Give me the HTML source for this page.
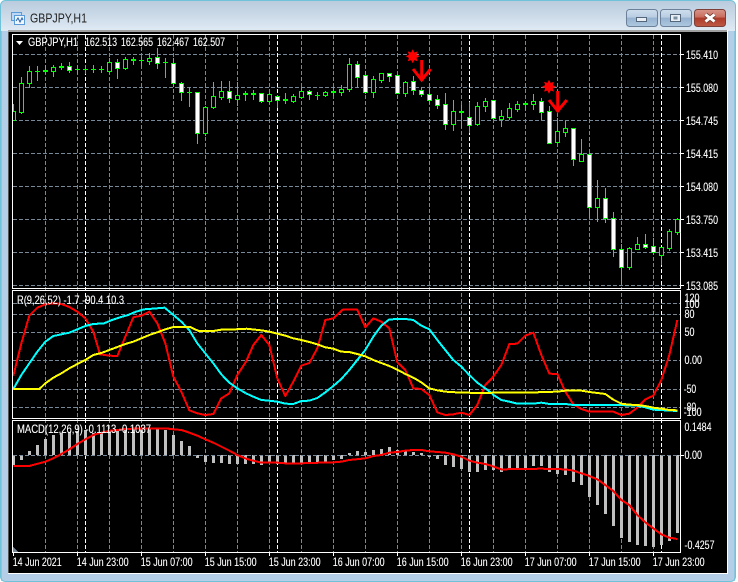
<!DOCTYPE html>
<html><head><meta charset="utf-8"><title>GBPJPY,H1</title>
<style>
html,body{margin:0;padding:0;background:#fff;width:738px;height:582px;overflow:hidden}
svg{display:block}
text{font-family:"Liberation Sans",sans-serif;font-size:12px;fill:#fff;stroke:#fff;stroke-width:.12}
.c{shape-rendering:crispEdges}
</style></head><body>
<svg width="738" height="582" viewBox="0 0 738 582" xmlns="http://www.w3.org/2000/svg">
<defs>
<linearGradient id="tt" x1="0" y1="0" x2="0" y2="1"><stop offset="0" stop-color="#b9cbdd"/><stop offset="1" stop-color="#dfeaf4"/></linearGradient>
<linearGradient id="btn" x1="0" y1="0" x2="0" y2="1"><stop offset="0" stop-color="#cfdeee"/><stop offset=".45" stop-color="#b9cde2"/><stop offset=".5" stop-color="#96b2cf"/><stop offset="1" stop-color="#aec8df"/></linearGradient>
<linearGradient id="cls" x1="0" y1="0" x2="0" y2="1"><stop offset="0" stop-color="#d8968a"/><stop offset=".45" stop-color="#c96e5f"/><stop offset=".5" stop-color="#ad3a28"/><stop offset="1" stop-color="#bd5a46"/></linearGradient>
<clipPath id="p1"><rect x="13" y="35" width="667" height="253"/></clipPath>
<clipPath id="p2"><rect x="13" y="291" width="667" height="127"/></clipPath>
<clipPath id="p3"><rect x="13" y="421" width="667" height="131"/></clipPath>
</defs>
<!-- window frame -->
<rect x=".5" y=".5" width="735" height="581" rx="5" fill="#b5cee7" stroke="#6fc2d8"/>
<path d="M1 6a5 5 0 0 1 5-5H730a5 5 0 0 1 5 5V31H1z" fill="url(#tt)"/>
<path d="M1.500 31V581M734.500 31V581" stroke="#6fc2d8" class="c" opacity=".6"/>
<!-- title icon -->
<g class="c">
<rect x="11.500" y="12.500" width="10" height="8" fill="#bcd8f4" stroke="#5a9ad8"/>
<rect x="14.500" y="15.500" width="10" height="9" fill="#eef6fe" stroke="#5a9ad8"/>
</g>
<path d="M16 21l2-3 2 4 2-4 1 2" fill="none" stroke="#2a62a8"/>
<text x="30" y="22.500" textLength="57" lengthAdjust="spacingAndGlyphs" style="font-size:13px;fill:#222;stroke:none">GBPJPY,H1</text>
<!-- buttons -->
<rect x="626.500" y="9.500" width="31" height="17" rx="3" fill="url(#btn)" stroke="#6b8199"/>
<rect x="636.500" y="17.500" width="10" height="4" fill="#e8eef4" stroke="#54667a" class="c"/>
<rect x="660.500" y="9.500" width="31" height="17" rx="3" fill="url(#btn)" stroke="#6b8199"/>
<rect x="670.500" y="14.500" width="10" height="7" fill="#e8eef4" stroke="#54667a" class="c"/>
<rect x="673.500" y="16.500" width="4" height="3" fill="#7a8ea2" class="c"/>
<rect x="694.500" y="9.500" width="31" height="17" rx="3" fill="url(#cls)" stroke="#7c4038"/>
<path d="M705.500 14.500l9 7M714.500 14.500l-9 7" stroke="#6e3a32" stroke-width="4.500"/>
<path d="M705.500 14.500l9 7M714.500 14.500l-9 7" stroke="#fff" stroke-width="2.800"/>
<!-- client area -->
<rect x="8" y="30" width="720" height="544" fill="#fff" class="c"/>
<rect x="8" y="30" width="719" height="2" fill="#a0a0a0" class="c"/>
<rect x="8" y="32" width="1" height="541" fill="#555" class="c"/>
<rect x="9" y="32" width="718" height="541" fill="#000" class="c"/>
<!-- grid -->
<path class="c" fill="none" stroke="#778899" stroke-dasharray="4 2" d="M13 54.500H680M13 87.500H680M13 120.500H680M13 153.500H680M13 186.500H680M13 219.500H680M13 252.500H680M13 285.500H680M13 303.500H680M13 314.500H680M13 332.500H680M13 360.500H680M13 389.500H680M13 407.500H680M13 455.500H680M45.500 35V552M77.500 35V552M109.500 35V552M141.500 35V552M173.500 35V552M205.500 35V552M237.500 35V552M269.500 35V552M301.500 35V552M333.500 35V552M365.500 35V552M397.500 35V552M429.500 35V552M461.500 35V552M493.500 35V552M525.500 35V552M557.500 35V552M589.500 35V552M621.500 35V552M653.500 35V552"/>
<path class="c" fill="none" stroke="#fff" stroke-dasharray="4 2" d="M85.500 35V552M277.500 35V552M469.500 35V552M661.500 35V552"/>
<!-- candles -->
<g clip-path="url(#p1)" class="c">
<path fill="none" stroke="#00ff00" d="M13.500 104V121M21.500 77V114M29.500 66V88M37.500 66V81M45.500 65V74M53.500 65V77M61.500 63V70M69.500 62V73M77.500 65V74M85.500 65V74M93.500 65V73M101.500 66V73M109.500 58V74M117.500 59V79M125.500 57V70M133.500 57V65M141.500 57V66M149.500 53V65M157.500 48V69M165.500 58V78M173.500 58V87M181.500 82V101M189.500 87V107M197.500 92V144M205.500 106V136M213.500 82V109M221.500 81V100M229.500 81V103M237.500 82V106M245.500 91V101M253.500 90V100M261.500 93V103M269.500 93V104M277.500 95V108M285.500 93V104M293.500 94V103M301.500 87V99M309.500 90V100M317.500 92V100M325.500 91V97M333.500 87V96M341.500 85V96M349.500 58V92M357.500 61V88M365.500 71V94M373.500 76V98M381.500 73V83M389.500 73V82M397.500 74V94M405.500 81V97M413.500 76V95M421.500 87V97M429.500 88V104M437.500 95V109M445.500 93V130M453.500 100V131M461.500 105V128M469.500 102V133M477.500 102V126M485.500 98V112M493.500 100V120M501.500 110V127M509.500 103V120M517.500 101V112M525.500 101V111M533.500 94V110M541.500 98V120M549.500 106V144M557.500 118V143M565.500 121V137M573.500 128V166M581.500 139V162M589.500 153V218M597.500 180V222M605.500 188V223M613.500 212V257M621.500 244V284M629.500 247V270M637.500 237V250M645.500 234V249M653.500 238V255M661.500 247V265M669.500 229V251M677.500 218V235"/>
<!-- hollow -->
<path fill="#000" stroke="#00ff00" d="M11.500 111.500h4v9h-4zM19.500 83.500h4v29h-4zM27.500 71.500h4v12h-4zM51.500 67.500h4v4h-4zM107.500 62.500h4v9h-4zM123.500 59.500h4v9h-4zM147.500 58.500h4v3h-4zM203.500 107.500h4v26h-4zM211.500 96.500h4v11h-4zM219.500 91.500h4v6h-4zM235.500 95.500h4v4h-4zM267.500 94.500h4v7h-4zM291.500 96.500h4v5h-4zM299.500 91.500h4v6h-4zM323.500 92.500h4v3h-4zM339.500 89.500h4v3h-4zM347.500 64.500h4v25h-4zM371.500 79.500h4v13h-4zM379.500 73.500h4v7h-4zM403.500 82.500h4v11h-4zM451.500 111.500h4v13h-4zM475.500 106.500h4v18h-4zM483.500 101.500h4v5h-4zM499.500 116.500h4v3h-4zM507.500 108.500h4v9h-4zM515.500 104.500h4v5h-4zM531.500 101.500h4v3h-4zM555.500 131.500h4v11h-4zM563.500 128.500h4v4h-4zM579.500 154.500h4v7h-4zM595.500 198.500h4v9h-4zM627.500 248.500h4v19h-4zM635.500 244.500h4v5h-4zM659.500 247.500h4v8h-4zM667.500 231.500h4v17h-4zM675.500 219.500h4v13h-4z"/>
<!-- white -->
<path fill="#fff" stroke="#00ff00" d="M67.500 66.500h4v4h-4zM115.500 62.500h4v6h-4zM155.500 57.500h4v6h-4zM171.500 63.500h4v20h-4zM179.500 83.500h4v9h-4zM195.500 92.500h4v41h-4zM227.500 91.500h4v7h-4zM259.500 93.500h4v8h-4zM275.500 96.500h4v4h-4zM307.500 91.500h4v3h-4zM355.500 64.500h4v13h-4zM363.500 75.500h4v17h-4zM387.500 73.500h4v3h-4zM395.500 75.500h4v18h-4zM411.500 81.500h4v9h-4zM419.500 90.500h4v4h-4zM427.500 94.500h4v6h-4zM435.500 99.500h4v6h-4zM443.500 104.500h4v20h-4zM467.500 117.500h4v8h-4zM491.500 100.500h4v18h-4zM539.500 101.500h4v11h-4zM547.500 111.500h4v32h-4zM571.500 128.500h4v31h-4zM587.500 154.500h4v53h-4zM603.500 198.500h4v20h-4zM611.500 218.500h4v31h-4zM619.500 249.500h4v18h-4zM643.500 244.500h4v3h-4zM651.500 246.500h4v6h-4z"/>
<!-- thick / thin crosses -->
<path fill="#00ff00" d="M43 70h5v2h-5zM59 66h5v2h-5zM131 59h5v2h-5zM243 93h5v2h-5zM251 93h5v2h-5zM283 99h5v2h-5zM331 91h5v2h-5zM459 111h5v2h-5zM523 103h5v2h-5zM35 71h5v1h-5zM75 69h5v1h-5zM83 69h5v1h-5zM91 69h5v1h-5zM99 69h5v1h-5zM139 60h5v1h-5zM163 62h5v1h-5zM187 92h5v1h-5zM315 95h5v1h-5z"/>
</g>
<!-- markers -->
<g fill="#ff0000">
<polygon transform="translate(412.700 56.300)" points="0,-7 1.600,-3.800 4.950,-4.950 3.800,-1.600 7,0 3.800,1.600 4.950,4.950 1.600,3.800 0,7 -1.600,3.800 -4.950,4.950 -3.800,1.600 -7,0 -3.800,-1.600 -4.950,-4.950 -1.600,-3.800"/>
<polygon transform="translate(549 86.700)" points="0,-7 1.600,-3.800 4.950,-4.950 3.800,-1.600 7,0 3.800,1.600 4.950,4.950 1.600,3.800 0,7 -1.600,3.800 -4.950,4.950 -3.800,1.600 -7,0 -3.800,-1.600 -4.950,-4.950 -1.600,-3.800"/>
</g>
<g fill="none" stroke="#ff0000" stroke-width="3">
<path d="M421.700 60V80"/><path d="M413 69l8.700 11 8.900-11"/>
<path d="M557.700 91V111"/><path d="M549 100l8.700 11 9.100-11"/>
</g>
<!-- oscillator pane -->
<g clip-path="url(#p2)" class="c" fill="none" stroke-width="6" stroke-linejoin="round">
<g transform="translate(0 285) scale(.33333)" stroke="#ff0000">
<polyline points="40,272 64,175 88,92 112,68 136,58 160,55 184,57 208,66 232,80 256,100 280,140 300,208 328,212 352,213 376,155 400,97 424,92 448,80 472,115 496,175 520,275 544,320 568,376 592,385 616,390 640,387 664,340 688,325 712,270 738,230"/>
</g>
<g transform="translate(246 285) scale(.33333)" stroke="#ff0000">
<polyline points="0,230 22,180 46,150 70,180 94,280 118,333 142,290 166,242 190,234 214,190 238,105 262,100 290,74 334,74 358,127 382,100 406,110 430,130 454,232 478,255 502,310 526,312 550,330 574,382 598,390 622,388 646,383 670,390 694,360 718,300 738,280"/>
</g>
<g transform="translate(492 285) scale(.33333)" stroke="#ff0000">
<polyline points="0,280 28,240 52,177 76,176 100,152 124,143 148,210 172,266 196,267 220,320 244,358 268,372 292,380 316,380 340,380 364,380 388,390 412,386 436,368 460,343 484,332 508,285 532,210 556,105"/>
</g>
<g transform="translate(0 285) scale(.33333)" stroke="#00ffff">
<polyline points="40,312 64,270 88,235 112,200 136,170 160,153 184,148 208,143 232,133 256,123 280,117 312,115 336,105 360,97 384,90 408,80 432,73 470,70 494,68 518,88 544,110 568,135 592,175 616,205 640,235 664,268 688,293 712,310 738,325"/>
</g>
<g transform="translate(246 285) scale(.33333)" stroke="#00ffff">
<polyline points="0,325 22,335 46,345 70,347 94,350 118,356 142,357 166,348 190,347 214,339 238,322 262,303 286,282 310,255 334,225 358,195 382,155 406,122 430,103 478,102 502,105 526,122 550,133 574,165 598,195 622,225 646,245 670,270 694,293 718,310 738,325"/>
</g>
<g transform="translate(492 285) scale(.33333)" stroke="#00ffff">
<polyline points="0,327 28,345 52,350 76,356 124,356 148,353 172,357 220,357 244,360 388,360 412,362 436,362 460,367 484,374 556,378"/>
</g>
<g transform="translate(0 285) scale(.33333)" stroke="#ffff00">
<polyline points="40,312 118,312 136,295 160,278 184,265 208,250 232,237 256,225 280,210 304,204 328,195 352,186 376,177 400,170 424,160 448,150 472,142 496,133 520,126 570,126 596,138 640,138 664,134 738,132"/>
</g>
<g transform="translate(246 285) scale(.33333)" stroke="#ffff00">
<polyline points="0,131 46,136 70,140 94,146 118,152 142,160 166,165 190,171 214,178 238,187 262,191 286,200 310,201 334,207 358,214 382,225 406,234 430,243 454,254 478,267 502,278 526,292 550,310 574,316 598,320 646,323 738,324"/>
</g>
<g transform="translate(492 285) scale(.33333)" stroke="#ffff00">
<polyline points="0,323 124,323 148,321 196,320 220,317 268,317 292,321 316,324 340,327 364,344 388,356 412,359 436,360 460,363 484,368 508,371 532,375 556,376"/>
</g>
</g>
<!-- MACD pane -->
<g clip-path="url(#p3)" class="c">
<path transform="translate(-1 0)" fill="none" stroke="#c0c0c0" stroke-width="3" d="M14.500 455V465M22.500 455V460M30.500 455V451M38.500 455V445M46.500 455V439M54.500 455V435M62.500 455V433M70.500 455V432M78.500 455V431M86.500 455V430M94.500 455V433M102.500 455V433M110.500 455V430M118.500 455V429M126.500 455V429M134.500 455V429M142.500 455V429M150.500 455V428M158.500 455V429M166.500 455V430M174.500 455V435M182.500 455V441M190.500 455V446M198.500 455V458M206.500 455V462M214.500 455V463M222.500 455V463M230.500 455V464M238.500 455V464M246.500 455V464M254.500 455V464M262.500 455V465M270.500 455V463M278.500 455V464M286.500 455V464M294.500 455V463M302.500 455V463M310.500 455V463M318.500 455V462M326.500 455V462M334.500 455V460M342.500 455V459M350.500 455V453M358.500 455V451M366.500 455V452M374.500 455V450M382.500 455V449M390.500 455V447M398.500 455V450M406.500 455V451M414.500 455V452M422.500 455V453M430.500 455V457M438.500 455V459M446.500 455V465M454.500 455V467M462.500 455V469M470.500 455V472M478.500 455V472M486.500 455V470M494.500 455V470M502.500 455V472M510.500 455V470M518.500 455V468M526.500 455V468M534.500 455V466M542.500 455V466M550.500 455V472M558.500 455V474M566.500 455V475M574.500 455V482M582.500 455V485M590.500 455V497M598.500 455V505M606.500 455V514M614.500 455V526M622.500 455V538M630.500 455V542M638.500 455V545M646.500 455V546M654.500 455V547M662.500 455V545M670.500 455V541M678.500 455V533"/>
<path fill="none" stroke="#778899" stroke-dasharray="4 2" d="M13 455.500H680"/>
<g fill="none" stroke="#ff0000" stroke-width="6" stroke-linejoin="round">
<g transform="translate(0 420) scale(.33333)"><polyline points="40,138 88,138 136,125 160,115 184,102 208,88 232,72 256,58 280,45 304,38 328,32 352,30 376,27 400,26 424,25 496,25 520,28 544,30 568,38 592,47 616,58 640,68 664,80 688,92 712,105 738,116"/></g>
<g transform="translate(246 420) scale(.33333)"><polyline points="0,116 22,122 46,128 94,128 118,130 166,130 190,129 262,127 286,125 310,120 358,115 382,108 406,105 430,98 454,96 478,92 502,90 526,90 550,94 598,98 622,103 646,110 670,122 694,128 718,132 738,138"/></g>
<g transform="translate(492 420) scale(.33333)"><polyline points="0,138 28,148 100,147 148,146 172,147 220,148 244,152 268,160 292,168 316,178 340,195 364,213 388,240 412,255 436,285 460,307 484,325 508,343 532,353 556,357"/></g>
</g>
<polygon points="13,547 13,552 18,552" fill="#778899"/>
</g>
<!-- pane borders and ticks -->
<path class="c" fill="none" stroke="#fff" d="M12.500 34.500H680.500V288.500H12.500ZM12.500 290.500H680.500V418.500H12.500ZM12.500 420.500H680.500V552.500H12.500ZM681 54.500h3M681 87.500h3M681 120.500h3M681 153.500h3M681 186.500h3M681 219.500h3M681 252.500h3M681 285.500h3M681 455.500h3M13.500 553v3M77.500 553v3M141.500 553v3M205.500 553v3M269.500 553v3M333.500 553v3M397.500 553v3M461.500 553v3M525.500 553v3M589.500 553v3M653.500 553v3"/>
<!-- header -->
<polygon points="16,41 23,41 19.500,45" fill="#fff"/>
<text x="28" y="46" textLength="50" lengthAdjust="spacingAndGlyphs">GBPJPY,H1</text>
<text x="85" y="46" textLength="32" lengthAdjust="spacingAndGlyphs">162.513</text>
<text x="121" y="46" textLength="32" lengthAdjust="spacingAndGlyphs">162.565</text>
<text x="157" y="46" textLength="32" lengthAdjust="spacingAndGlyphs">162.467</text>
<text x="193" y="46" textLength="32" lengthAdjust="spacingAndGlyphs">162.507</text>
<text x="17" y="304" textLength="107" lengthAdjust="spacingAndGlyphs">R(9,26,52) -1.7 -90.4 10.3</text>
<text x="17" y="433" textLength="134" lengthAdjust="spacingAndGlyphs">MACD(12,26,9) -0.1113 -0.1037</text>
<!-- price labels -->
<text x="686" y="59" textLength="32" lengthAdjust="spacingAndGlyphs">155.410</text>
<text x="686" y="92" textLength="32" lengthAdjust="spacingAndGlyphs">155.080</text>
<text x="686" y="125" textLength="32" lengthAdjust="spacingAndGlyphs">154.745</text>
<text x="686" y="158" textLength="32" lengthAdjust="spacingAndGlyphs">154.415</text>
<text x="686" y="191" textLength="32" lengthAdjust="spacingAndGlyphs">154.080</text>
<text x="686" y="224" textLength="32" lengthAdjust="spacingAndGlyphs">153.750</text>
<text x="686" y="257" textLength="32" lengthAdjust="spacingAndGlyphs">153.415</text>
<text x="686" y="290" textLength="32" lengthAdjust="spacingAndGlyphs">153.085</text>
<text x="684.500" y="302" textLength="15" lengthAdjust="spacingAndGlyphs">120</text>
<text x="684.500" y="308" textLength="15" lengthAdjust="spacingAndGlyphs">100</text>
<text x="684.500" y="318" textLength="10" lengthAdjust="spacingAndGlyphs">80</text>
<text x="684.500" y="336" textLength="10" lengthAdjust="spacingAndGlyphs">50</text>
<text x="684.500" y="364" textLength="17.500" lengthAdjust="spacingAndGlyphs">0.00</text>
<text x="683.700" y="393" textLength="12.500" lengthAdjust="spacingAndGlyphs">-50</text>
<text x="683.700" y="411" textLength="12.500" lengthAdjust="spacingAndGlyphs">-80</text>
<text x="683.700" y="416" textLength="18" lengthAdjust="spacingAndGlyphs">-100</text>
<text x="684.500" y="431" textLength="27" lengthAdjust="spacingAndGlyphs">0.1484</text>
<text x="684.500" y="459" textLength="17.500" lengthAdjust="spacingAndGlyphs">0.00</text>
<text x="684.500" y="549" textLength="30" lengthAdjust="spacingAndGlyphs">-0.4257</text>
<!-- date labels -->
<text x="12.700" y="566" textLength="49" lengthAdjust="spacingAndGlyphs">14 Jun 2021</text>
<text x="76.700" y="566" textLength="52" lengthAdjust="spacingAndGlyphs">14 Jun 23:00</text>
<text x="140.700" y="566" textLength="52" lengthAdjust="spacingAndGlyphs">15 Jun 07:00</text>
<text x="204.700" y="566" textLength="52" lengthAdjust="spacingAndGlyphs">15 Jun 15:00</text>
<text x="268.700" y="566" textLength="52" lengthAdjust="spacingAndGlyphs">15 Jun 23:00</text>
<text x="332.700" y="566" textLength="52" lengthAdjust="spacingAndGlyphs">16 Jun 07:00</text>
<text x="396.700" y="566" textLength="52" lengthAdjust="spacingAndGlyphs">16 Jun 15:00</text>
<text x="460.700" y="566" textLength="52" lengthAdjust="spacingAndGlyphs">16 Jun 23:00</text>
<text x="524.700" y="566" textLength="52" lengthAdjust="spacingAndGlyphs">17 Jun 07:00</text>
<text x="588.700" y="566" textLength="52" lengthAdjust="spacingAndGlyphs">17 Jun 15:00</text>
<text x="652.700" y="566" textLength="52" lengthAdjust="spacingAndGlyphs">17 Jun 23:00</text>
</svg>
</body></html>
